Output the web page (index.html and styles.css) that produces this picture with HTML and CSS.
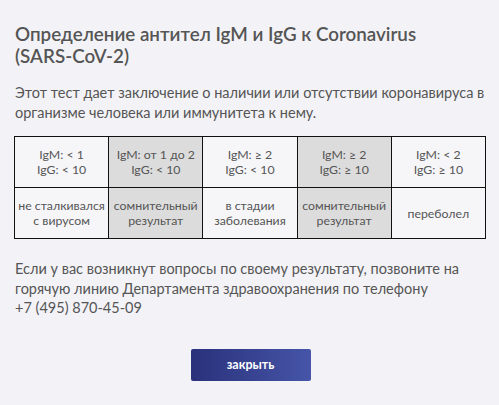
FILE: index.html
```html
<!DOCTYPE html>
<html lang="ru">
<head>
<meta charset="utf-8">
<link rel="stylesheet" href="styles.css">
</head>
<body>
<div class="modal">
  <h1 class="title">Определение антител IgM и IgG к Coronavirus <span class="nowrap">(SARS-CoV-2)</span></h1>
  <p class="text">Этот тест дает заключение о наличии или отсутствии коронавируса в организме человека или иммунитета к нему.</p>
  <table class="results">
    <tr class="row-top">
      <td>IgM: &lt; 1<br>IgG: &lt; 10</td>
      <td class="grey">IgM: от 1 до 2<br>IgG: &lt; 10</td>
      <td>IgM: ≥ 2<br>IgG: &lt; 10</td>
      <td class="grey">IgM: ≥ 2<br>IgG: ≥ 10</td>
      <td>IgM: &lt; 2<br>IgG: ≥ 10</td>
    </tr>
    <tr class="row-bottom">
      <td>не сталкивался с вирусом</td>
      <td class="grey">сомнительный результат</td>
      <td>в стадии заболевания</td>
      <td class="grey">сомнительный результат</td>
      <td>переболел</td>
    </tr>
  </table>
  <p class="text contact">Если у вас возникнут вопросы по своему результату, позвоните на горячую линию Департамента здравоохранения по телефону<br>+7 (495) 870-45-09</p>
  <div class="actions">
    <button class="btn">закрыть</button>
  </div>
</div>
</body>
</html>
```
FILE: styles.css
```css
html, body {
  margin: 0;
  padding: 0;
  background: #f3f3f7;
}
body {
  font-family: "Lato", "Noto Sans", sans-serif;
  color: #555555;
}
.modal {
  padding: 23px 14px 0 15px;
}
.title {
  margin: 0;
  font-size: 18.8px;
  line-height: 22px;
  font-weight: 600;
  color: #555;
}
.nowrap { white-space: nowrap; }
.text {
  margin: 16px 0 0;
  font-size: 14.5px;
  line-height: 19.5px;
}
.results {
  margin: 14px 0 0 -1px;
  border-collapse: collapse;
  width: 472px;
  table-layout: fixed;
  background: #f6f6f9;
}
.results td {
  border: 1.5px solid #111;
  text-align: center;
  font-size: 12.3px;
  line-height: 15px;
  padding: 0 2px;
  color: #555;
}
.row-top td { height: 50px; }
.row-bottom td { height: 50px; }
.results td.grey { background: #dcdcdc; }
.contact {
  margin-top: 20px;
}
.actions {
  display: flex;
  justify-content: center;
  margin-top: 31px;
}
.btn {
  width: 120px;
  height: 32px;
  border: none;
  border-radius: 2px;
  background: linear-gradient(90deg, #29317a, #4655a8);
  color: #fff;
  font-family: inherit;
  font-weight: 700;
  font-size: 12.5px;
  margin-left: 1px;
}
```
